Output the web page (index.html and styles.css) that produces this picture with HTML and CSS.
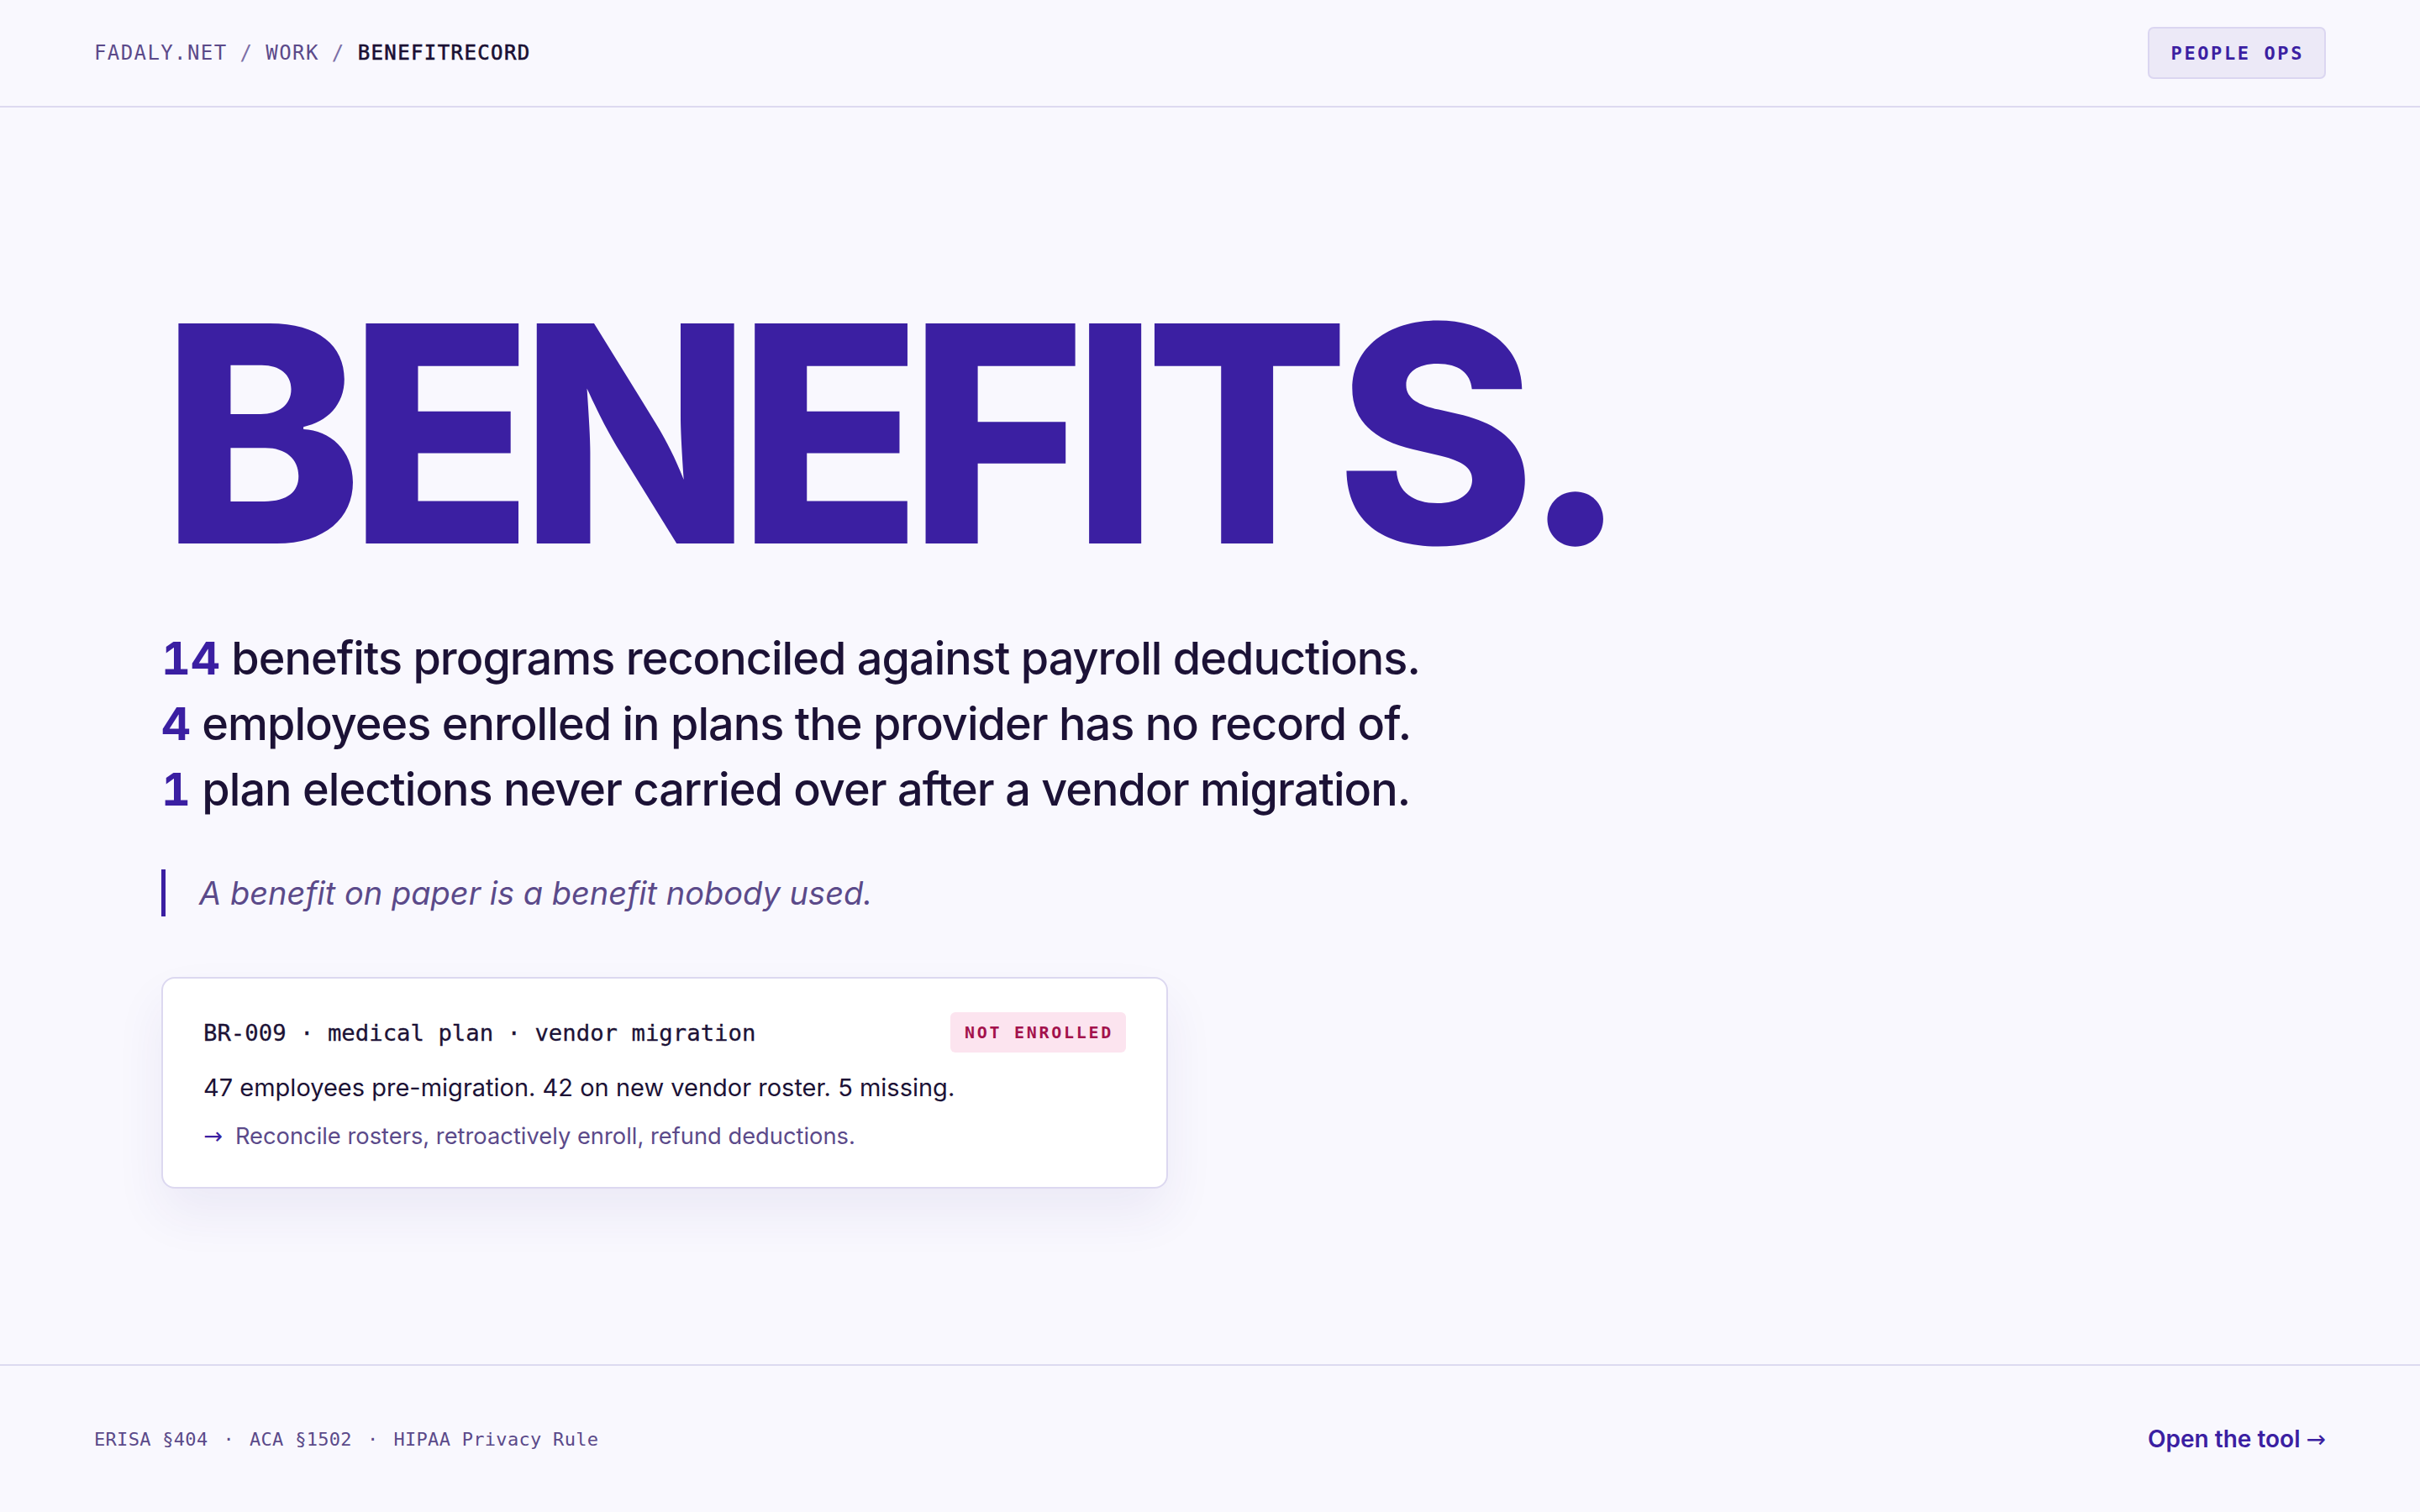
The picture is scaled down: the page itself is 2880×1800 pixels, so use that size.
FILE: index.html
```html
<!DOCTYPE html>
<html lang="en">
<head>
<meta charset="utf-8">
<title>BenefitRecord</title>
<link rel="stylesheet" href="styles.css">
</head>
<body>
<div class="page">
  <header class="topbar">
    <nav class="crumbs">
      <span class="crumb">FADALY.NET</span>
      <span class="sep">/</span>
      <span class="crumb">WORK</span>
      <span class="sep">/</span>
      <span class="crumb current">BENEFITRECORD</span>
    </nav>
    <span class="tag">PEOPLE OPS</span>
  </header>

  <main class="hero">
    <h1 class="title">BENEFITS.</h1>
    <div class="stats">
      <p class="stat"><strong>14</strong> benefits programs reconciled against payroll deductions.</p>
      <p class="stat"><strong>4</strong> employees enrolled in plans the provider has no record of.</p>
      <p class="stat"><strong>1</strong> plan elections never carried over after a vendor migration.</p>
    </div>
    <blockquote class="quote">A benefit on paper is a benefit nobody used.</blockquote>
    <article class="card">
      <div class="card-head">
        <span class="card-id">BR-009 · medical plan · vendor migration</span>
        <span class="status">NOT ENROLLED</span>
      </div>
      <p class="card-body">47 employees pre-migration. 42 on new vendor roster. 5 missing.</p>
      <p class="card-action"><span class="arrow">→</span>Reconcile rosters, retroactively enroll, refund deductions.</p>
    </article>
  </main>

  <footer class="footer">
    <div class="refs">
      <span>ERISA §404</span><span class="dot">·</span><span>ACA §1502</span><span class="dot">·</span><span>HIPAA Privacy Rule</span>
    </div>
    <a class="open" href="#">Open the tool <span class="open-arrow">→</span></a>
  </footer>
</div>
</body>
</html>
```

FILE: styles.css
```css
* { box-sizing: border-box; }

html, body {
  margin: 0;
  padding: 0;
  background: #f9f8fe;
}

body {
  font-family: Inter, "Noto Sans", sans-serif;
  color: #1c1236;
}

.page {
  min-height: 1800px;
  display: flex;
  flex-direction: column;
}

.topbar {
  height: 128px;
  padding: 0 112px;
  display: flex;
  align-items: center;
  justify-content: space-between;
  border-bottom: 2px solid #dddaf0;
}

.crumbs {
  font-family: "DejaVu Sans Mono", "Liberation Mono", monospace;
  font-size: 24px;
  letter-spacing: 1.4px;
  color: #5b4a8a;
  display: flex;
  white-space: pre;
}

.sep {
  color: #7c6fa6;
  margin: 0 15px;
}

.current {
  color: #1a1033;
  -webkit-text-stroke: 0.6px #1a1033;
}

.tag {
  font-family: "DejaVu Sans Mono", "Liberation Mono", monospace;
  font-size: 22px;
  font-weight: 700;
  letter-spacing: 2.6px;
  color: #3b1fa2;
  background: #ece9f7;
  border: 2px solid #dbd6f1;
  border-radius: 7px;
  height: 62px;
  padding: 0 24px 0 26px;
  display: flex;
  align-items: center;
}

.hero {
  flex: 1;
  padding: 226px 192px 0;
}

.title {
  margin: 0;
  font-family: Inter, sans-serif;
  font-weight: 800;
  font-size: 360px;
  line-height: 324px;
  letter-spacing: -0.045em;
  color: #3b1fa2;
}

.stats {
  margin-top: 67px;
}

.stat {
  margin: 0;
  font-size: 54px;
  line-height: 78px;
  font-weight: 500;
  color: #1c1236;
  letter-spacing: -0.018em;
}

.stat strong {
  font-weight: 700;
  color: #3b1fa2;
  font-variant-numeric: tabular-nums;
  letter-spacing: 0;
}

.quote {
  margin: 56px 0 0;
  border-left: 5px solid #3b1fa2;
  padding-left: 40px;
  font-size: 38px;
  line-height: 56px;
  font-style: italic;
  color: #5b4a8a;
}

.card {
  margin-top: 72px;
  width: 1198px;
  background: #ffffff;
  border: 2px solid #dcd8f0;
  border-radius: 16px;
  padding: 40px 48px 41px;
  box-shadow: 0 30px 60px rgba(60, 40, 140, 0.07);
}

.card-head {
  display: flex;
  align-items: center;
  justify-content: space-between;
  height: 48px;
}

.card-id {
  font-family: "DejaVu Sans Mono", "Liberation Mono", monospace;
  font-size: 27.3px;
  color: #1c1236;
  -webkit-text-stroke: 0.3px #1c1236;
}

.status {
  font-family: "DejaVu Sans Mono", "Liberation Mono", monospace;
  font-size: 20px;
  font-weight: 700;
  letter-spacing: 2.7px;
  color: #a3124c;
  background: #fce4ef;
  border-radius: 6px;
  height: 48px;
  padding: 0 15px 0 17px;
  display: flex;
  align-items: center;
}

.card-body {
  margin: 19px 0 0;
  font-size: 29px;
  line-height: 45px;
  color: #1c1236;
}

.card-action {
  margin: 16px 0 0;
  font-size: 27.3px;
  line-height: 39px;
  color: #5b4a8a;
}

.arrow {
  font-family: "DejaVu Sans", sans-serif;
  color: #3b1fa2;
  margin-right: 15px;
}

.footer {
  height: 176px;
  border-top: 2px solid #dddaf0;
  padding: 0 112px;
  display: flex;
  align-items: center;
  justify-content: space-between;
}

.refs {
  font-family: "DejaVu Sans Mono", "Liberation Mono", monospace;
  font-size: 22px;
  letter-spacing: 0.3px;
  color: #5b4a8a;
  display: flex;
  white-space: pre;
}

.dot {
  margin: 0 18px;
}

.open {
  font-size: 28px;
  font-weight: 600;
  color: #3b1fa2;
  text-decoration: none;
}

.open-arrow {
  font-family: "DejaVu Sans", sans-serif;
  font-weight: 400;
}
```
